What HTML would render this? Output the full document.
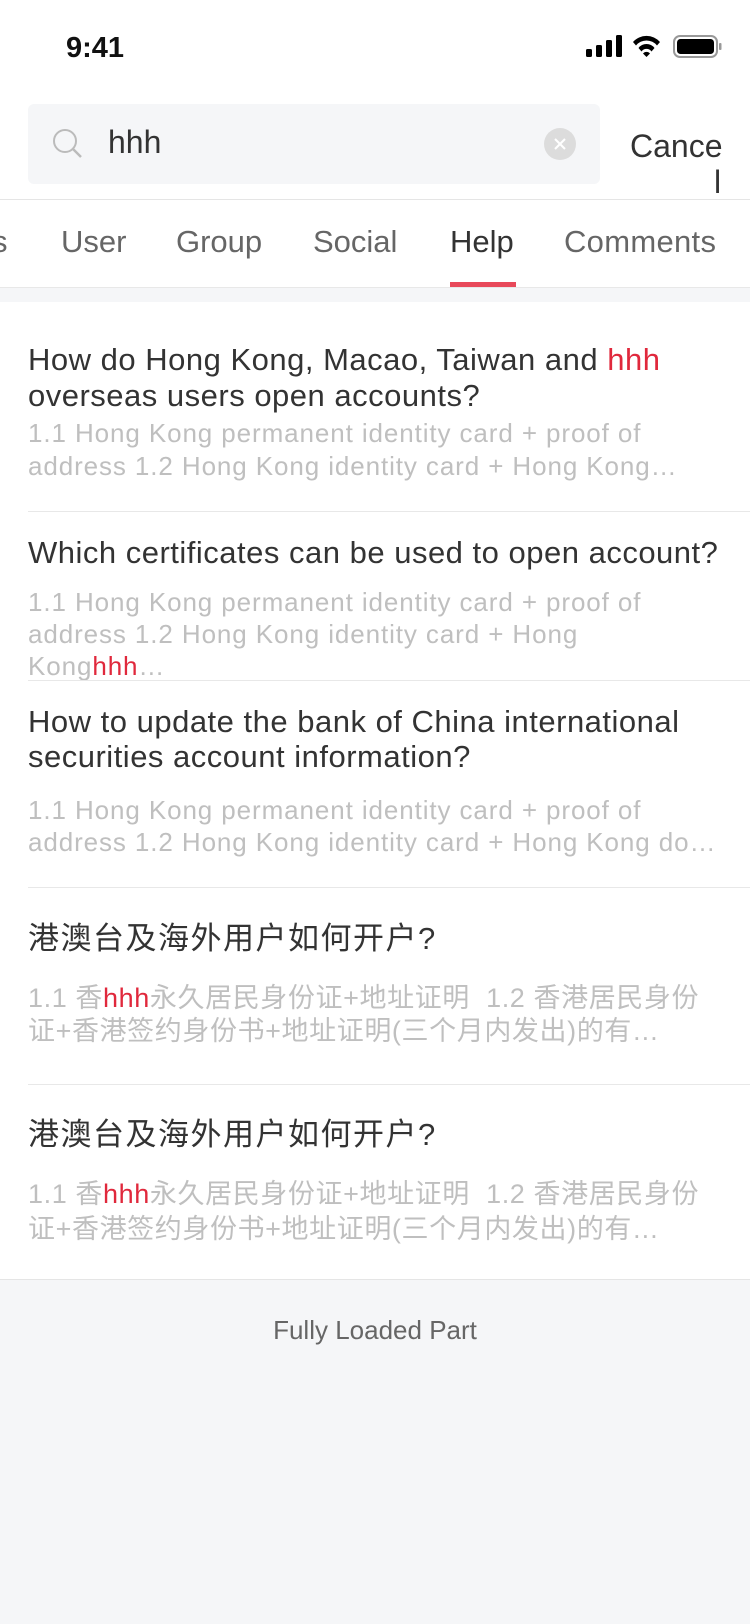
<!DOCTYPE html>
<html><head><meta charset="utf-8"><style>
*{margin:0;padding:0;box-sizing:border-box}
body{width:750px;height:1624px;background:#f5f6f8;position:relative;overflow:hidden;font-family:"Liberation Sans","Noto Sans CJK SC",sans-serif}
.a{position:absolute;white-space:nowrap}
.t{font-size:31px;letter-spacing:0.5px;color:#333;line-height:36px;left:28px}
.d{font-size:26px;letter-spacing:0.9px;color:#bfbfbf;line-height:32px;left:28px}
.tc{font-size:31px;letter-spacing:1.5px}
.dc{font-size:27px;letter-spacing:0.6px}
.r{color:#e0283c}
.hr{position:absolute;left:28px;right:0;height:1px;background:#e8e8e8}
.tab{position:absolute;top:222px;font-size:31px;color:#666;line-height:40px}
</style></head><body>
<div class="a" style="left:0;top:0;width:750px;height:288px;background:#fff"></div>
<div class="a" style="left:66px;top:30px;font-size:29px;font-weight:bold;color:#111;line-height:36px">9:41</div>
<svg class="a" style="left:586px;top:34px" width="140" height="26" viewBox="0 0 140 26">
<rect x="0" y="15" width="6" height="8" rx="1.5" fill="#000"/><rect x="10" y="11" width="6" height="12" rx="1.5" fill="#000"/><rect x="20" y="6" width="6" height="17" rx="1.5" fill="#000"/><rect x="30" y="1" width="6" height="22" rx="1.5" fill="#000"/>
<path d="M47 8 A18 18 0 0 1 74 8 L71 11.5 A13.5 13.5 0 0 0 50 11.5 Z" fill="#000"/><path d="M52.5 14 A10 10 0 0 1 68.5 14 L65.5 17.5 A6 6 0 0 0 55.5 17.5 Z" fill="#000"/><path d="M57 19.5 L60.5 23 L64 19.5 A4.5 4.5 0 0 0 57 19.5 Z" fill="#000"/>
<rect x="88" y="2" width="43" height="21" rx="6" fill="none" stroke="#999" stroke-width="2"/><rect x="91" y="5" width="37" height="15" rx="3.5" fill="#000"/><rect x="133" y="9" width="2.5" height="7" rx="1" fill="#999"/>
</svg>
<div class="a" style="left:28px;top:104px;width:572px;height:80px;background:#f5f6f8;border-radius:6px"></div>
<svg class="a" style="left:50px;top:126px" width="36" height="36" viewBox="0 0 36 36"><circle cx="15" cy="15" r="11" fill="none" stroke="#bbb" stroke-width="2"/><path d="M23 23 L31 31" stroke="#bbb" stroke-width="2.5"/></svg>
<div class="a" style="left:108px;top:122px;font-size:32px;color:#333;line-height:40px">hhh</div>
<div class="a" style="left:544px;top:128px;width:32px;height:32px;border-radius:50%;background:#dcdcdc"></div>
<svg class="a" style="left:544px;top:128px" width="32" height="32"><path d="M11 11 L21 21 M21 11 L11 21" stroke="#fff" stroke-width="2"/></svg>
<div class="a" style="left:630px;top:126px;font-size:32px;color:#333;line-height:40px">Cance</div>
<div class="a" style="left:714px;top:164px;font-size:32px;color:#333;line-height:36px">l</div>
<div class="a" style="left:0;top:199px;width:750px;height:1px;background:#e5e5e5"></div>
<div class="tab" style="left:-8px">s</div>
<div class="tab" style="left:61px">User</div>
<div class="tab" style="left:176px">Group</div>
<div class="tab" style="left:313px">Social</div>
<div class="tab" style="left:450px;color:#333">Help</div>
<div class="tab" style="left:564px;letter-spacing:0.3px">Comments</div>
<div class="a" style="left:450px;top:282px;width:66px;height:6px;background:#e8495a"></div>
<div class="a" style="left:0;top:287px;width:750px;height:1px;background:#e8e8e8"></div>
<div class="a" style="left:0;top:302px;width:750px;height:977px;background:#fff"></div>

<div class="a t" style="top:342px">How do Hong Kong, Macao, Taiwan and <span class="r">hhh</span></div>
<div class="a t" style="top:378px">overseas users open accounts?</div>
<div class="a d" style="top:417px">1.1 Hong Kong permanent identity card + proof of</div>
<div class="a d" style="top:450px">address 1.2 Hong Kong identity card + Hong Kong…</div>
<div class="hr" style="top:511px"></div>

<div class="a t" style="top:535px">Which certificates can be used to open account?</div>
<div class="a d" style="top:586px">1.1 Hong Kong permanent identity card + proof of</div>
<div class="a d" style="top:618px">address 1.2 Hong Kong identity card + Hong</div>
<div class="a d" style="top:650px;height:30px;overflow:hidden">Kong<span class="r">hhh</span>…</div>
<div class="hr" style="top:680px"></div>

<div class="a t" style="top:704px">How to update the bank of China international</div>
<div class="a t" style="top:739px">securities account information?</div>
<div class="a d" style="top:794px">1.1 Hong Kong permanent identity card + proof of</div>
<div class="a d" style="top:826px">address 1.2 Hong Kong identity card + Hong Kong do…</div>
<div class="hr" style="top:887px"></div>

<div class="a t tc" style="top:921px">港澳台及海外用户如何开户?</div>
<div class="a d dc" style="top:982px">1.1 香<span class="r">hhh</span>永久居民身份证+地址证明&nbsp; 1.2 香港居民身份</div>
<div class="a d dc" style="top:1015px">证+香港签约身份书+地址证明(三个月内发出)的有…</div>
<div class="hr" style="top:1084px"></div>

<div class="a t tc" style="top:1117px">港澳台及海外用户如何开户?</div>
<div class="a d dc" style="top:1178px">1.1 香<span class="r">hhh</span>永久居民身份证+地址证明&nbsp; 1.2 香港居民身份</div>
<div class="a d dc" style="top:1213px">证+香港签约身份书+地址证明(三个月内发出)的有…</div>
<div class="a" style="left:0;top:1279px;width:750px;height:1px;background:#e5e5e5"></div>

<div class="a" style="left:0;width:750px;text-align:center;top:1314px;font-size:26px;color:#666;line-height:32px">Fully Loaded Part</div>
</body></html>
